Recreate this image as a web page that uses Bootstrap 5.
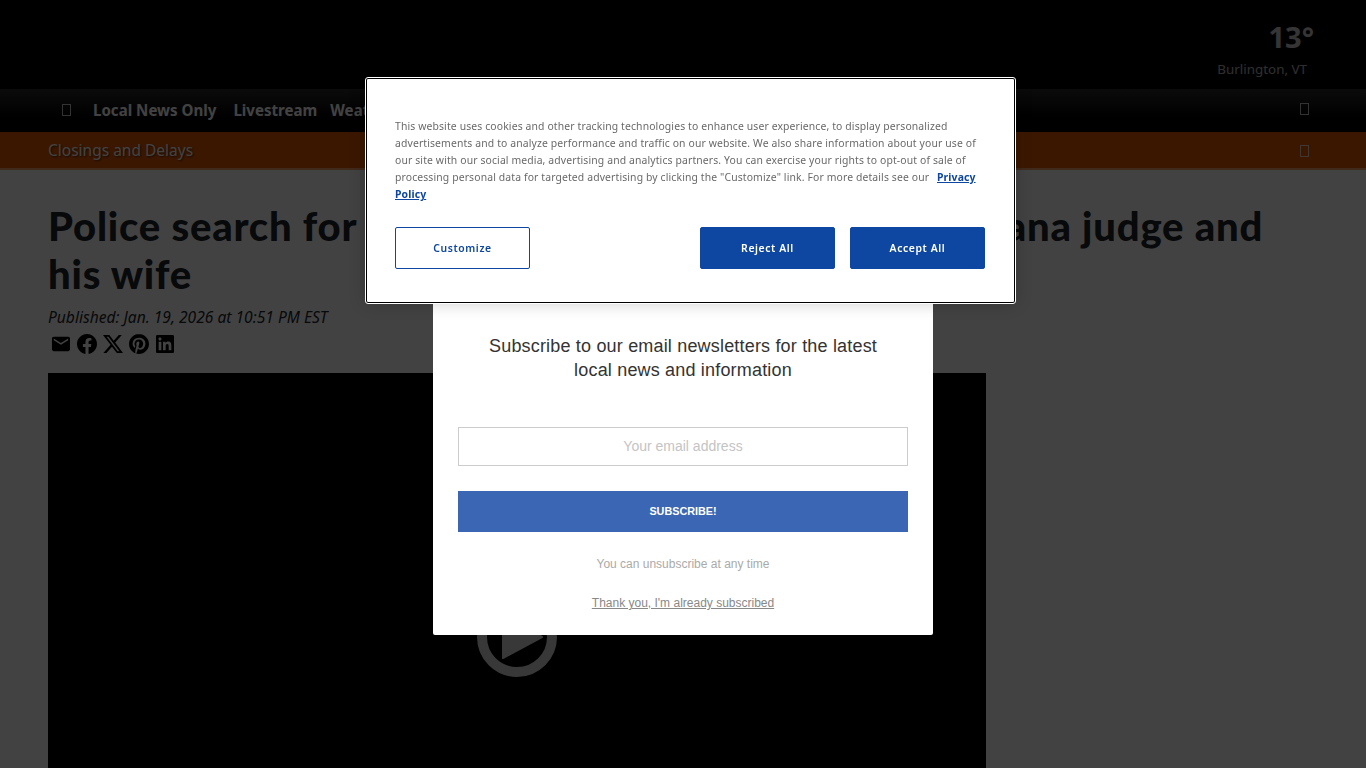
<!DOCTYPE html>
<html lang="en">
<head>
    <meta charset="UTF-8">
    <title>Police search</title>
    <link href="https://cdn.jsdelivr.net/npm/bootstrap@5.3.0/dist/css/bootstrap.min.css" rel="stylesheet">
    <style>
        html, body { height: 768px; overflow: hidden; }
        body { font-family: "Noto Sans", sans-serif; background: #fff; }
        .top-band { height: 89px; background: #000; padding: 19px 52px 0 0; color: #fff; }
        .temp { font-size: 29px; font-weight: 700; line-height: 36px; opacity: .8; }
        .place { font-size: 13.4px; line-height: 20px; margin-top: 4px; padding-right: 7px; opacity: .7; }
        .main-nav { height: 43px; background: linear-gradient(#2c2c2c, #000 70%); padding: 0 57px 1px 62px; }
        .main-nav a { color: #fff; font-size: 15.1px; font-weight: 700; text-decoration: none; margin-right: 17px; white-space: nowrap; }
        .main-nav a.tight { margin-right: 13px; }
        .tofu { display: inline-block; width: 9px; height: 12px; border: 1px solid #fff; opacity: .75; flex: none; }
        .main-nav .tofu { margin-right: 22px; }
        .main-nav .tofu.ms-auto { margin-right: 0; position: relative; top: -1px; }
        .alert-bar { height: 38px; background: #e35a00; border-bottom: 2px solid #f2a36c; padding: 1px 57px 0 48px; color: #fff; font-size: 15.5px; text-shadow: 1px 1px 2px rgba(0,0,0,.6); }
        .story { padding: 32px 48px 0; }
        .story h1 { font-family: Lato, sans-serif; font-size: 40px; line-height: 48px; font-weight: 900; letter-spacing: .8px; margin: 0 0 7px; }
        .story h1 span { letter-spacing: .45px; }
        .pub { font-size: 15.6px; line-height: 24px; font-style: italic; }
        .shares { height: 26px; margin: 2px 0 16px; }
        .shares svg { width: 26px; height: 26px; padding: 3px; fill: #000; display: block; }
        .video-box { width: 938px; height: 527px; background: #000; }
        .video-box svg { width: 80px; height: 80px; margin-top: 224px; }
        .dim { position: fixed; inset: 0; background: rgba(0,0,0,.74); z-index: 10; }
        .news-pop { position: fixed; left: 433px; top: 290px; width: 500px; height: 345px; background: #fff; border-radius: 2px; z-index: 20; font-family: "Liberation Sans", sans-serif; padding: 44px 25px 0; }
        .news-pop h2 { font-size: 18px; line-height: 24px; letter-spacing: .18px; font-weight: 400; color: #333; margin: 0 0 45px; }
        .mail-field { height: 39px; border: 1px solid #ccc; border-radius: 0; text-align: center; font-size: 14px; color: #c4c4c4; line-height: 37px; margin-bottom: 25px; }
        .sub-btn { display: block; width: 100%; height: 41px; background: #3b66b3; color: #fff; border: 0; border-radius: 0; font-size: 10.8px; font-weight: 700; padding: 0; }
        .note { font-size: 12px; line-height: 16px; color: #aaa; margin-top: 24px; }
        .thanks { display: block; font-size: 12px; line-height: 16px; color: #888; margin-top: 23px; }
        .cookie-box { position: fixed; left: 366px; top: 78px; width: 649px; height: 225px; background: #fff; border: 1px solid #000; outline: 1px solid #fff; border-radius: 2px; z-index: 30; padding: 39px 29px 0 28px; box-shadow: 0 0 18px rgba(0,0,0,.2); }
        .cookie-box p { font-size: 10.4px; line-height: 17px; color: #696969; margin: 0 0 24px; letter-spacing: .13px; }
        .cookie-box p a { color: #0d47a1; font-weight: 700; margin-left: 5px; }
        .ck-row { gap: 15px; }
        .ck-btn { width: 135px; height: 42px; font-size: 10.4px; font-weight: 600; letter-spacing: .6px; border-radius: 2px; padding: 1px 0 0; border: 1px solid #0d47a1; }
        .ck-solid { background: #0d47a1; color: #fff; }
        .ck-line { background: #fff; color: #0d47a1; }
    </style>
</head>
<body>

    <div class="top-band d-flex flex-column align-items-end">
        <div class="temp">13°</div>
        <div class="place">Burlington, VT</div>
    </div>

    <nav class="main-nav d-flex align-items-center">
        <span class="tofu"></span>
        <a href="#">Local News Only</a>
        <a class="tight" href="#">Livestream</a>
        <a href="#">Weather</a>
        <span class="tofu ms-auto"></span>
    </nav>

    <div class="alert-bar d-flex align-items-center justify-content-between">
        <span>Closings and Delays</span>
        <span class="tofu"></span>
    </div>

    <div class="story">
        <h1>Police search for <span>suspect in attack on Lafayette,</span> Indiana judge and<br>his wife</h1>
        <div class="pub">Published: Jan. 19, 2026 at 10:51 PM EST</div>
        <div class="shares d-flex">
            <svg viewBox="0 0 24 24"><path d="M20 4H4c-1.1 0-2 .9-2 2v12c0 1.1.9 2 2 2h16c1.1 0 2-.9 2-2V6c0-1.1-.9-2-2-2zm0 4l-8 5-8-5V6l8 5 8-5v2z" transform="translate(-1 -1) scale(1.08)"/></svg>
            <svg viewBox="0 0 24 24"><path d="M24 12.073c0-6.627-5.373-12-12-12s-12 5.373-12 12c0 5.99 4.388 10.954 10.125 11.854v-8.385H7.078v-3.47h3.047V9.43c0-3.007 1.792-4.669 4.533-4.669 1.312 0 2.686.235 2.686.235v2.953H15.83c-1.491 0-1.956.925-1.956 1.874v2.25h3.328l-.532 3.47h-2.796v8.385C19.612 23.027 24 18.062 24 12.073z"/></svg>
            <svg viewBox="0 0 24 24"><path d="M18.901 1.153h3.68l-8.04 9.19L24 22.846h-7.406l-5.8-7.584-6.638 7.584H.474l8.6-9.83L0 1.154h7.594l5.243 6.932ZM17.61 20.644h2.039L6.486 3.24H4.298Z"/></svg>
            <svg viewBox="0 0 24 24"><path d="M12.017 0C5.396 0 .029 5.367.029 11.987c0 5.079 3.158 9.417 7.618 11.162-.105-.949-.199-2.403.041-3.439.219-.937 1.406-5.957 1.406-5.957s-.359-.72-.359-1.781c0-1.663.967-2.911 2.168-2.911 1.024 0 1.518.769 1.518 1.688 0 1.029-.653 2.567-.992 3.992-.285 1.193.6 2.165 1.775 2.165 2.128 0 3.768-2.245 3.768-5.487 0-2.861-2.063-4.869-5.008-4.869-3.41 0-5.409 2.562-5.409 5.199 0 1.033.394 2.143.889 2.741.099.12.112.225.085.345-.09.375-.293 1.199-.334 1.363-.053.225-.172.271-.401.165-1.495-.69-2.433-2.878-2.433-4.646 0-3.776 2.748-7.252 7.92-7.252 4.158 0 7.392 2.967 7.392 6.923 0 4.135-2.607 7.462-6.233 7.462-1.214 0-2.354-.629-2.758-1.379l-.749 2.848c-.269 1.045-1.004 2.352-1.498 3.146 1.123.345 2.306.535 3.55.535 6.607 0 11.985-5.365 11.985-11.987C23.97 5.39 18.592.026 11.985.026L12.017 0z"/></svg>
            <svg viewBox="0 0 24 24"><path d="M20.447 20.452h-3.554v-5.569c0-1.328-.027-3.037-1.852-3.037-1.853 0-2.136 1.445-2.136 2.939v5.667H9.351V9h3.414v1.561h.046c.477-.9 1.637-1.85 3.37-1.85 3.601 0 4.267 2.37 4.267 5.455v6.286zM5.337 7.433c-1.144 0-2.063-.926-2.063-2.065 0-1.138.92-2.063 2.063-2.063 1.14 0 2.064.925 2.064 2.063 0 1.139-.925 2.065-2.064 2.065zm1.782 13.019H3.555V9h3.564v11.452zM22.225 0H1.771C.792 0 0 .774 0 1.729v20.542C0 23.227.792 24 1.771 24h20.451C23.2 24 24 23.227 24 22.271V1.729C24 .774 23.2 0 22.222 0h.003z" transform="translate(1.2 1.2) scale(.9)"/></svg>
        </div>
        <div class="video-box d-flex justify-content-center align-items-start">
            <svg viewBox="0 0 80 80"><circle cx="40" cy="40" r="35" fill="none" stroke="#d8d8d8" stroke-width="10"/><path d="M26 19 L65 40 L26 61 Z" fill="#d8d8d8" stroke="#d8d8d8" stroke-width="2" stroke-linejoin="round"/></svg>
        </div>
    </div>

    <div class="dim"></div>

    <div class="news-pop text-center">
        <h2>Subscribe to our email newsletters for the latest<br>local news and information</h2>
        <div class="mail-field">Your email address</div>
        <button class="sub-btn" type="button">SUBSCRIBE!</button>
        <div class="note">You can unsubscribe at any time</div>
        <a class="thanks" href="#">Thank you, I'm already subscribed</a>
    </div>

    <div class="cookie-box">
        <p>This website uses cookies and other tracking technologies to enhance user experience, to display personalized advertisements and to analyze performance and traffic on our website. We also share information about your use of our site with our social media, advertising and analytics partners. You can exercise your rights to opt-out of sale of processing personal data for targeted advertising by clicking the "Customize" link. For more details see our <a href="#">Privacy Policy</a></p>
        <div class="d-flex ck-row">
            <button class="btn ck-btn ck-line me-auto" type="button">Customize</button>
            <button class="btn ck-btn ck-solid" type="button">Reject All</button>
            <button class="btn ck-btn ck-solid" type="button">Accept All</button>
        </div>
    </div>

    <script src="https://cdn.jsdelivr.net/npm/bootstrap@5.3.0/dist/js/bootstrap.bundle.min.js"></script>
</body>
</html>
